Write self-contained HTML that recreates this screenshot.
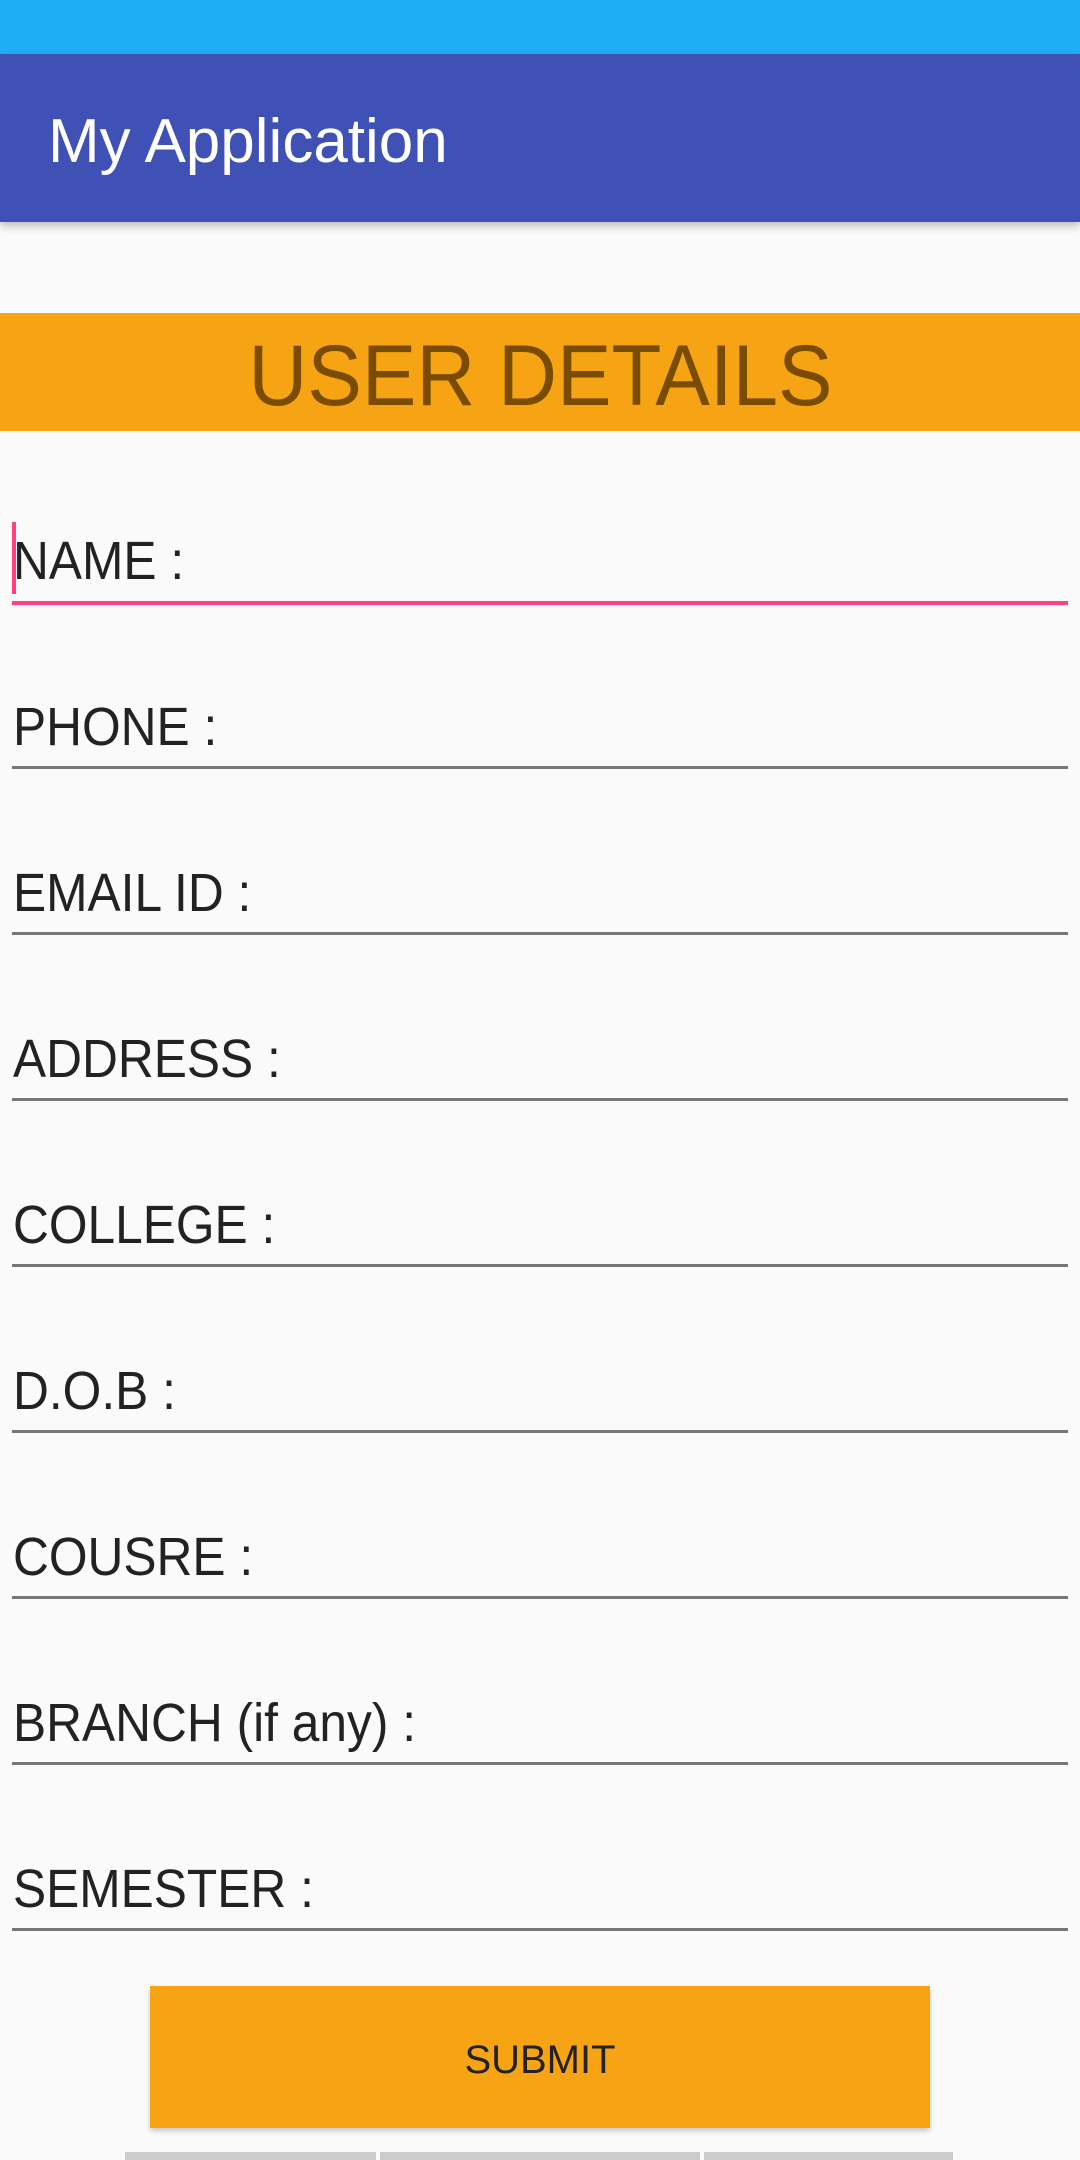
<!DOCTYPE html>
<html><head><meta charset="utf-8"><style>
*{margin:0;padding:0;box-sizing:border-box}
body{width:1080px;height:2160px;background:#fafafa;font-family:"Liberation Sans",Roboto,sans-serif;position:relative;overflow:hidden}
.sb{position:absolute;left:0;top:0;width:1080px;height:54px;background:#1eaef5}
.ab{position:absolute;left:0;top:54px;width:1080px;height:168px;background:#3f51b5;box-shadow:0 4px 8px rgba(0,0,0,.25)}
.ab span{position:absolute;left:48px;top:52px;font-size:62px;color:#fff;transform:scaleX(1.0);transform-origin:left}
.ban{position:absolute;left:0;top:313px;width:1080px;height:118px;background:#f7a414;text-align:center;font-size:86px;line-height:126px;color:#7a4c00}
.ban span{display:inline-block;transform:scaleX(0.95)}
.f{position:absolute;left:12px;width:1056px;height:3px;background:#777}
.l{position:absolute;left:13px;font-size:54px;color:#222;transform:scaleX(0.92);transform-origin:left;white-space:nowrap}
.btn{position:absolute;left:150px;top:1986px;width:780px;height:142px;background:#f7a414;box-shadow:0 3px 5px rgba(0,0,0,.2);text-align:center;line-height:148px;font-size:40px;color:#222}
.g{position:absolute;top:2152px;height:8px;background:#ccc}
</style></head><body>
<div class="sb"></div>
<div class="ab"><span>My Application</span></div>
<div class="ban"><span>USER DETAILS</span></div>
<div style="position:absolute;left:12px;top:522px;width:4px;height:72px;background:#ff4081"></div>
<div class="l" style="top:530px">NAME :</div><div class="f" style="top:601px;height:4px;background:#ff4081"></div>
<div class="l" style="top:696px">PHONE :</div><div class="f" style="top:766px"></div>
<div class="l" style="top:862px">EMAIL ID :</div><div class="f" style="top:932px"></div>
<div class="l" style="top:1028px">ADDRESS :</div><div class="f" style="top:1098px"></div>
<div class="l" style="top:1194px">COLLEGE :</div><div class="f" style="top:1264px"></div>
<div class="l" style="top:1360px">D.O.B :</div><div class="f" style="top:1430px"></div>
<div class="l" style="top:1526px">COUSRE :</div><div class="f" style="top:1596px"></div>
<div class="l" style="top:1692px">BRANCH (if any) :</div><div class="f" style="top:1762px"></div>
<div class="l" style="top:1858px">SEMESTER :</div><div class="f" style="top:1928px"></div>
<div class="btn">SUBMIT</div>
<div class="g" style="left:125px;width:251px"></div>
<div class="g" style="left:380px;width:320px"></div>
<div class="g" style="left:704px;width:249px"></div>
</body></html>
